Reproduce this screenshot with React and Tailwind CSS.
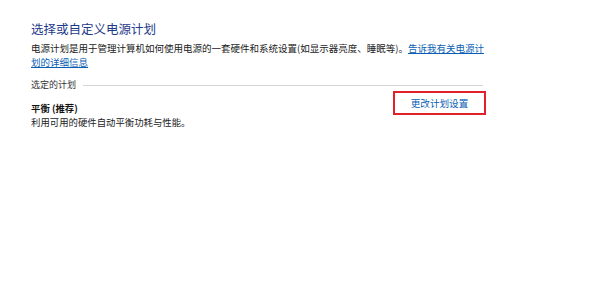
export default function App() {
  return (
    <div
      className="w-[600px] h-[307px] bg-white overflow-hidden"
      style={{ fontFamily: '"Noto Sans CJK SC", "Noto Sans", sans-serif' }}
    >
      <div className="pl-[31px] pt-[20px] w-[486px]">
        <h1 className="text-[12.5px] leading-[18px] text-[#1e3a8a] font-normal">选择或自定义电源计划</h1>
        <div className="mt-[3px] text-[9.5px] text-[#222]">
          <div className="h-[14px] leading-[14px] whitespace-nowrap">
            电源计划是用于管理计算机如何使用电源的一套硬件和系统设置(如显示器亮度、睡眠等)。
            <a className="text-[#0a5fb4] underline">告诉我有关电源计</a>
          </div>
          <div className="h-[14px] leading-[14px]">
            <a className="text-[#0a5fb4] underline">划的详细信息</a>
          </div>
        </div>
        <div className="mt-[10px] flex items-center gap-[7px] pr-[3px]">
          <span className="text-[9px] leading-[12px] text-[#333]">选定的计划</span>
          <div className="flex-1 h-px bg-[#d4d4d4]"></div>
        </div>
        <div className="flex items-start">
          <div className="flex-1 pt-[10px]">
            <div className="text-[9.4px] leading-[14px] font-bold text-[#111]">平衡 (推荐)</div>
            <div className="text-[9.4px] leading-[14px] text-[#222]">利用可用的硬件自动平衡功耗与性能。</div>
          </div>
          <div className="mt-[0px] w-[93px] h-[24px] border-2 border-[#e0202a] flex items-center justify-center">
            <span className="text-[9.6px] text-[#0a5fb4]">更改计划设置</span>
          </div>
        </div>
      </div>
    </div>
  );
}
